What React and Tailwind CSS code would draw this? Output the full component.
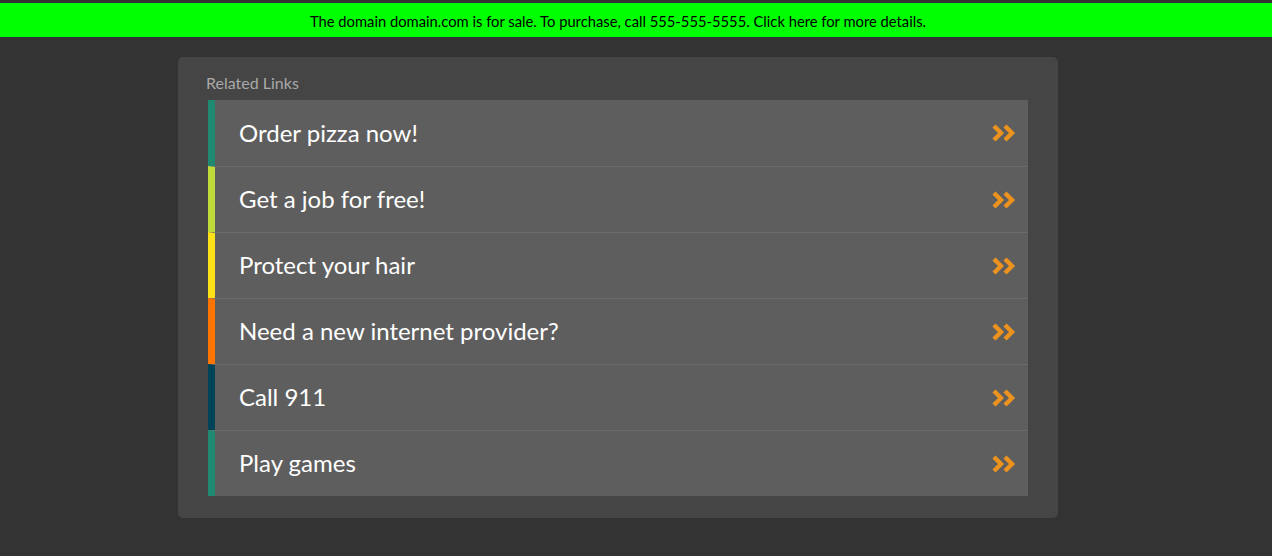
import React from 'react';

const LINKS = [
    { label: 'Order pizza now!', color: 'border-[#1f8a70]' },
    { label: 'Get a job for free!', color: 'border-[#bedb39]' },
    { label: 'Protect your hair', color: 'border-[#ffe11a]' },
    { label: 'Need a new internet provider?', color: 'border-[#fd7400]' },
    { label: 'Call 911', color: 'border-[#004358]' },
    { label: 'Play games', color: 'border-[#1f8a70]' },
];

const Chevrons = () => (
    <svg width="26" height="18" viewBox="0 0 26 18" fill="none" className="shrink-0">
        <polyline points="3,2 10,9 3,16" stroke="#ec921f" strokeWidth="4.4" strokeLinejoin="miter" />
        <polyline points="14,2 21,9 14,16" stroke="#ec921f" strokeWidth="4.4" strokeLinejoin="miter" />
    </svg>
);

const App = () => {
    return (
        <div className="min-h-[556px] bg-[#333333] font-['Lato','Open_Sans',sans-serif] pt-[3px]">
            <div className="h-[34px] bg-[#00ff00] flex items-center justify-center pr-[36px] pt-[2px] text-[14.75px] text-black">
                The domain domain.com is for sale. To purchase, call 555-555-5555. Click here for more details.
            </div>
            <div className="flex justify-center pt-5 pr-[36px]">
                <div className="w-[880px] bg-[#454545] rounded-[5px] pt-[15px] pb-[22px] pl-[28px] pr-[30px]">
                    <div className="text-[16px] leading-[22px] text-[#a9a9a9] mb-[6px]">Related Links</div>
                    <div className="ml-[2px]">
                        {LINKS.map((link, i) => (
                            <div
                                key={i}
                                className={`h-[66px] flex items-center justify-between bg-[#5e5e5e] border-l-[7px] ${link.color} ${i > 0 ? 'border-t border-t-[#6c6c6c]' : ''} pl-6 pr-[11px]`}
                            >
                                <span className="text-[24px] leading-[32px] -mt-[1px] text-white">{link.label}</span>
                                <Chevrons />
                            </div>
                        ))}
                    </div>
                </div>
            </div>
        </div>
    );
};

export default App;
